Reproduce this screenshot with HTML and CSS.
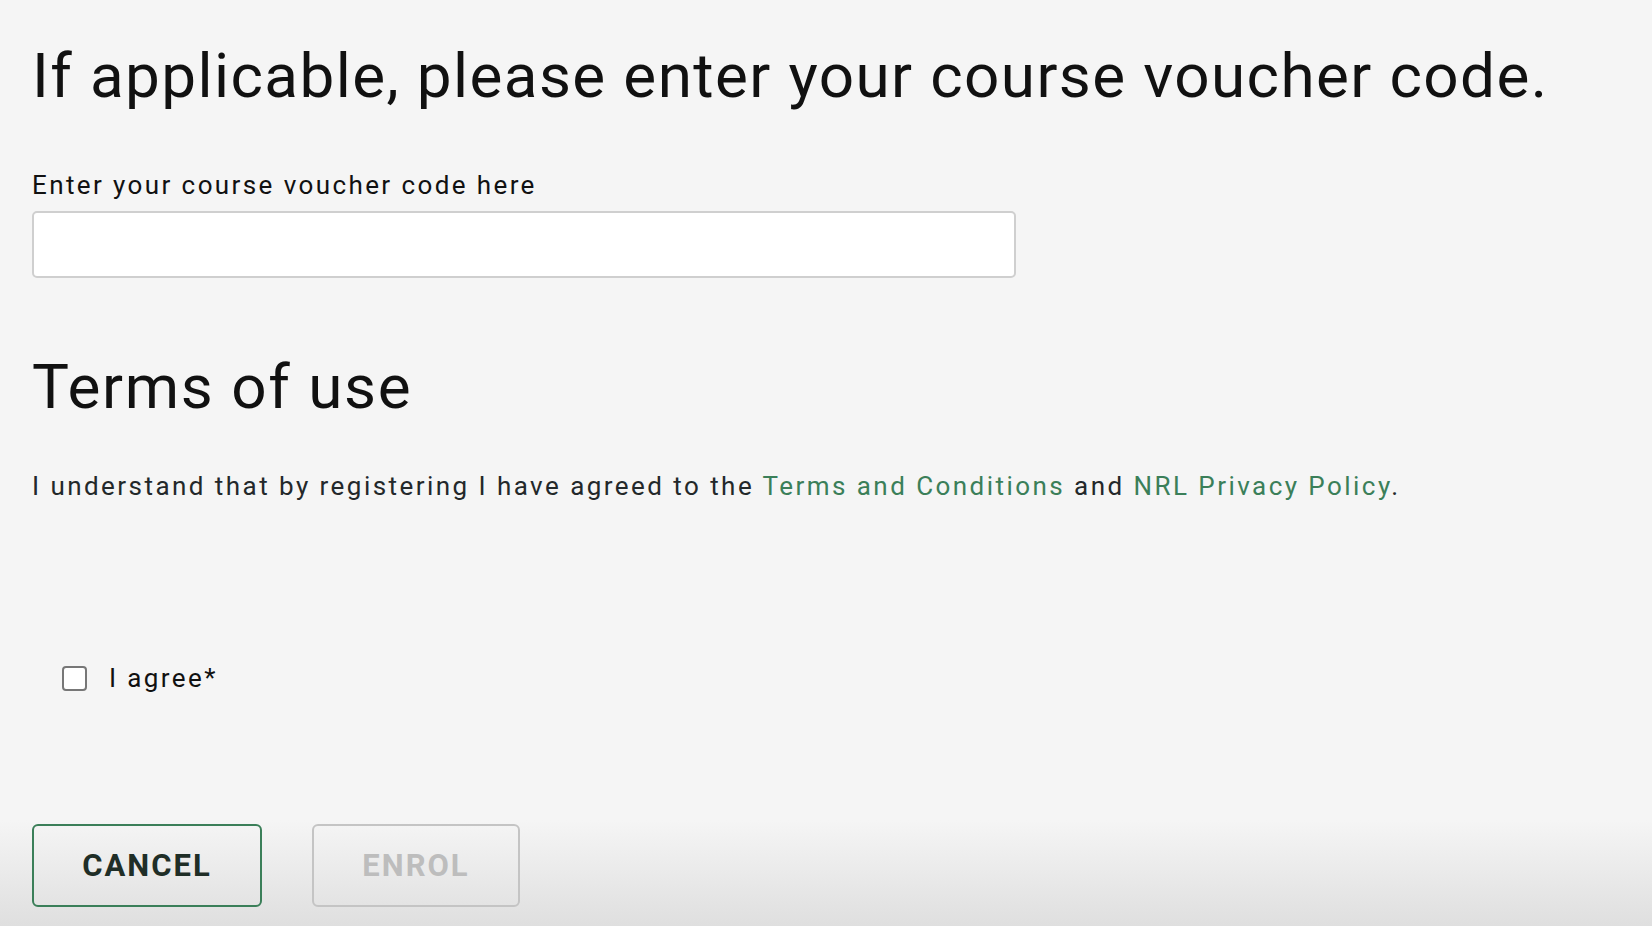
FILE: index.html
```html
<!DOCTYPE html>
<html lang="en">
<head>
<meta charset="utf-8">
<title>Course voucher</title>
<link rel="stylesheet" href="styles.css">
</head>
<body>
<main class="page">
  <h1 class="title">If applicable, please enter your course voucher code.</h1>
  <label class="field-label" for="voucher">Enter your course voucher code here</label>
  <input class="field-input" id="voucher" type="text">
  <h2 class="title section-title">Terms of use</h2>
  <p class="terms-text">I understand that by registering I have agreed to the <a class="link" href="#">Terms and Conditions</a> and <a class="link" href="#">NRL Privacy Policy</a>.</p>
  <label class="agree-row">
    <span class="checkbox"></span>
    <span class="agree-text">I agree*</span>
  </label>
  <div class="actions">
    <button class="btn btn-cancel" type="button">CANCEL</button>
    <button class="btn btn-enrol" type="button" disabled>ENROL</button>
  </div>
</main>
</body>
</html>
```

FILE: styles.css
```css
html, body {
  margin: 0;
  padding: 0;
}
body {
  min-height: 926px;
  background: linear-gradient(to bottom, #f5f5f5 0, #f5f5f5 820px, #dfdfdf 926px);
  font-family: Roboto, "Liberation Sans", Arial, sans-serif;
  color: #111;
}
.page {
  padding: 39px 32px 0 32px;
  display: flex;
  flex-direction: column;
  align-items: flex-start;
}
.title {
  margin: 0;
  font-size: 62px;
  line-height: 74px;
  font-weight: 400;
  color: #111;
  letter-spacing: 1.4px;
  white-space: nowrap;
}
.section-title {
  letter-spacing: 1.6px;
}
.field-label {
  margin-top: 57px;
  font-size: 26px;
  line-height: 31px;
  letter-spacing: 2.4px;
  color: #111;
}
.field-input {
  margin-top: 10px;
  box-sizing: border-box;
  width: 984px;
  height: 67px;
  border: 2px solid #cfcfcf;
  border-radius: 5px;
  background: #fff;
  font: inherit;
  font-size: 26px;
  padding: 0 16px;
  outline: none;
}
.section-title {
  margin-top: 72px;
}
.terms-text {
  margin: 47px 0 0 0;
  font-size: 26px;
  line-height: 31px;
  letter-spacing: 2.45px;
  color: #23282a;
}
.link {
  color: #3b7f59;
  text-decoration: none;
}
.agree-row {
  margin-top: 161px;
  margin-left: 30px;
  display: flex;
  align-items: center;
  gap: 22px;
  cursor: pointer;
}
.checkbox {
  box-sizing: border-box;
  width: 25px;
  height: 25px;
  border: 2px solid #777;
  border-radius: 4px;
  background: #fff;
}
.agree-text {
  font-size: 26px;
  line-height: 31px;
  letter-spacing: 2.4px;
  color: #111;
}
.actions {
  margin-top: 130px;
  display: flex;
  gap: 50px;
}
.btn {
  box-sizing: border-box;
  height: 83px;
  border-radius: 6px;
  background: transparent;
  font-family: Roboto, "Liberation Sans", Arial, sans-serif;
  font-weight: 700;
  font-size: 31px;
  letter-spacing: 2px;
  padding: 0;
}
.btn-cancel {
  width: 230px;
  border: 2px solid #3b7f59;
  color: #1f2e27;
}
.btn-enrol {
  width: 208px;
  border: 2px solid #c4c4c4;
  color: #bdbdbd;
}
```
